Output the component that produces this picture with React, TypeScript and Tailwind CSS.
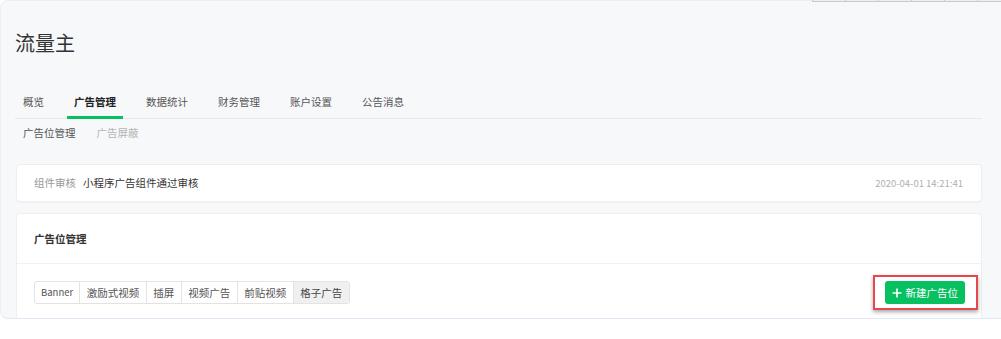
import React from "react";

const tabs = ["概览", "广告管理", "数据统计", "财务管理", "账户设置", "公告消息"];
const segs = ["Banner", "激励式视频", "插屏", "视频广告", "前贴视频", "格子广告"];

export default function App() {
  return (
    <div
      className="relative w-[1001px] h-[339px] bg-white overflow-hidden"
      style={{ fontFamily: '"Noto Sans CJK SC", "Noto Sans", sans-serif' }}
    >
      <div className="flex flex-col h-[319px] w-full bg-[#f7f8fa] rounded-l-[8px] border border-r-0 border-[#eceef1] border-b-[#e2e9f5] pl-[14px] pr-[19px] overflow-hidden">
        <div className="pt-[28px] text-[20px] leading-[28px] text-[#333]">流量主</div>

        <div className="mt-[29px] flex gap-[16px] pl-px border-b border-[#e6e8eb]">
          {tabs.map((t, i) => (
            <div
              key={t}
              className={
                i === 1
                  ? "px-[7px] pt-[8px] pb-[6px] -mb-px border-b-[3px] border-[#07c160] text-[10.5px] leading-[16px] font-bold text-[#222]"
                  : "px-[7px] pt-[8px] pb-[6px] -mb-px border-b-[3px] border-transparent text-[10.5px] leading-[16px] text-[#555]"
              }
            >
              {t}
            </div>
          ))}
        </div>

        <div className="flex gap-[21px] pl-[8px] pt-[6px] text-[10.5px] leading-[16px]">
          <span className="text-[#555]">广告位管理</span>
          <span className="text-[#b5b5b5]">广告屏蔽</span>
        </div>

        <div className="mt-[23px] h-[38px] ml-px flex items-center justify-between bg-white rounded-[4px] border border-[#eceef1] shadow-[0_1px_2px_rgba(0,0,0,0.03)] pl-[17px] pr-[18px] text-[10.5px]">
          <div className="flex gap-[7px]">
            <span className="text-[#9a9a9a]">组件审核</span>
            <span className="text-[#353535]">小程序广告组件通过审核</span>
          </div>
          <span className="text-[9.5px] text-[#b0b0b0]">2020-04-01 14:21:41</span>
        </div>

        <div className="mt-[11px] ml-px flex-1 bg-white rounded-t-[4px] border border-[#eceef1] border-b-0">
          <div className="h-[50px] flex items-center pl-[17px] border-b border-[#f0f1f3] text-[10.5px] font-bold text-[#333]">
            广告位管理
          </div>
          <div className="flex items-center justify-between pl-[17px] pr-[16px] pt-[17px]">
            <div className="flex h-[23px] border border-[#e3e3e3] rounded-[3px] overflow-hidden text-[10.5px] text-[#555]">
              {segs.map((s, i) => (
                <div
                  key={s}
                  className={
                    i === 0
                      ? "flex items-center px-[6px] border-r border-[#e3e3e3] text-[9.5px]"
                      : i === segs.length - 1
                      ? "flex items-center px-[6.5px] bg-[#f0f0f0] text-[#444]"
                      : "flex items-center px-[6.5px] border-r border-[#e3e3e3]"
                  }
                >
                  {s}
                </div>
              ))}
            </div>
            <div className="relative">
              <div className="absolute -left-[12px] -top-[6px] -right-[13px] -bottom-[6px] border-2 border-[#e5484d] shadow-[0_2px_4px_rgba(0,0,0,0.35)]" />
              <div className="relative flex items-center gap-[4px] h-[23px] px-[7px] bg-[#07c160] rounded-[3px] text-white text-[10.5px]">
                <svg width="10" height="10" viewBox="0 0 10 10">
                  <path d="M5 0.5V9.5M0.5 5H9.5" stroke="white" strokeWidth="1.6" />
                </svg>
                <span>新建广告位</span>
              </div>
            </div>
          </div>
        </div>
      </div>

      <div className="absolute top-0 left-[812px] flex h-[2px] border-b border-[#c9cbc9]">
        {[0, 1, 2, 3, 4, 5].map((k) => (
          <div key={k} className="w-[33px] border-l border-[#c9cbc9]" />
        ))}
      </div>
    </div>
  );
}
